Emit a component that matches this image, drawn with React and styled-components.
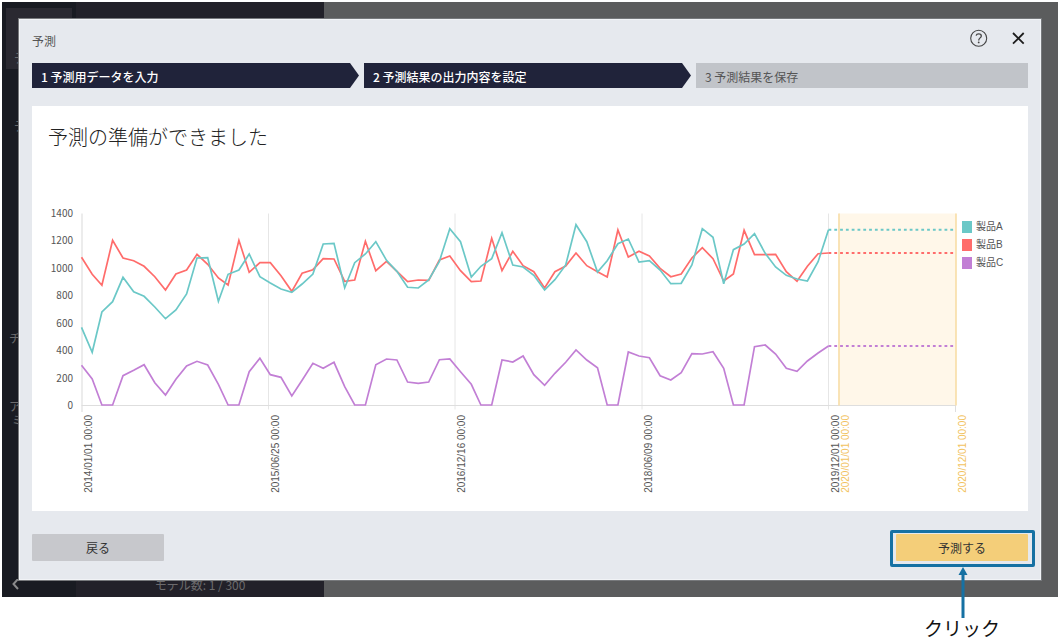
import React from "react";
import styled, { createGlobalStyle, css } from "styled-components";

const GlobalStyle = createGlobalStyle`
  * { box-sizing: border-box; }
  body {
    margin: 0;
    padding: 2px 2px 42px;
    background: #fff;
    color: #333;
    font-family: "Noto Sans CJK JP", "Noto Sans", sans-serif;
    font-size: 12px;
  }
`;

const Stage = styled.div`
  position: relative;
  padding: 17px;
`;

/* Application shell dimmed behind the dialog */
const Shell = styled.div`
  position: absolute;
  inset: 0;
  display: flex;
  overflow: hidden;
  background: #5b5c5d;
  color: #6c6b6d;
`;

const Rail = styled.nav`
  width: 74px;
  flex: none;
  display: flex;
  flex-direction: column;
  padding: 6px 4px 4px;
  background: #191b22;
`;

const RailItem = styled.div`
  flex: none;
  height: ${(p) => p.$height}px;
  display: flex;
  align-items: flex-end;
  padding: 0 0 4px ${(p) => (p.$indent ? 8 : 3)}px;
  background: ${(p) => (p.$active ? "#2a2931" : "transparent")};
  color: #6c6b6d;
  line-height: 14px;
  white-space: pre;
`;

const RailToggle = styled.button`
  margin-top: auto;
  padding: 0 0 0 5px;
  border: 0;
  background: none;
  color: #8a8a8c;
  text-align: left;
  line-height: 0;
`;

const ListPane = styled.div`
  width: 248px;
  flex: none;
  display: flex;
  align-items: flex-end;
  justify-content: center;
  padding-bottom: 3px;
  background: #222129;
  line-height: 18px;
`;

const Dialog = styled.section`
  position: relative;
  padding: 0 13px 19px;
  background: #e6e9ee;
  box-shadow: inset 0 0 0 1px #f1f3f6, 0 0 0 1px #77797c;
`;

const Header = styled.header`
  display: flex;
  align-items: center;
  justify-content: space-between;
  height: 44px;
`;

const DialogTitle = styled.h1`
  margin: 0;
  color: #555;
  font-size: 12px;
  font-weight: 400;
  line-height: 18px;
`;

const HeaderActions = styled.div`
  align-self: flex-start;
  display: flex;
  align-items: center;
  gap: 20px;
  height: 38px;
`;

const IconButton = styled.button`
  width: 20px;
  height: 20px;
  padding: 0;
  border: 0;
  background: none;
  line-height: 0;
  cursor: pointer;
`;

const Steps = styled.ol`
  display: grid;
  grid-template-columns: repeat(3, 1fr);
  margin: 0;
  padding: 0;
  list-style: none;
`;

const Step = styled.li`
  height: 25px;
  padding: 0 9px;
  font-size: 12px;
  line-height: 27px;
  white-space: nowrap;
  ${(p) =>
    p.$reached
      ? css`
          margin-right: 5px;
          background: #20233a;
          color: #fff;
          font-weight: 500;
          clip-path: polygon(0 0, calc(100% - 9px) 0, 100% 50%, calc(100% - 9px) 100%, 0 100%);
        `
      : css`
          background: #c1c4c9;
          color: #555;
        `}
`;

const Panel = styled.div`
  margin-top: 18px;
  padding: 16px 0 11px;
  background: #fff;
`;

const PanelTitle = styled.h2`
  margin: 0 16px;
  color: #222;
  font-size: 20px;
  font-weight: 300;
  line-height: 30px;
`;

const Figure = styled.figure`
  display: flex;
  align-items: flex-start;
  margin: 48px 0 0;
`;

const Plot = styled.svg`
  flex: 1;
  min-width: 0;
  overflow: visible;
  font-size: 10px;
`;

const AxisValue = styled.text`
  fill: #555;
  text-anchor: end;
`;

const AxisDate = styled.text`
  fill: ${(p) => (p.$forecast ? "#f2c25e" : "#555")};
  font-family: "Liberation Sans", sans-serif;
  text-anchor: end;
`;

const Legend = styled.ul`
  flex: none;
  width: 66px;
  margin: 0;
  padding: 21px 0 0;
  list-style: none;
`;

const LegendItem = styled.li`
  display: flex;
  align-items: center;
  gap: 4px;
  margin-bottom: 6px;
  color: #555;
  font-family: "Liberation Sans", "Noto Sans CJK JP", sans-serif;
  font-size: 10px;
  line-height: 12px;
`;

const Swatch = styled.span`
  width: 10px;
  height: 12px;
  background: ${(p) => p.$color};
`;

const Footer = styled.footer`
  display: flex;
  justify-content: space-between;
  margin-top: 23px;
`;

const ActionButton = styled.button`
  display: block;
  width: 132px;
  height: 27px;
  padding: 0;
  border: 0;
  border-radius: 1px;
  background: ${(p) => (p.$primary ? "#f4ce79" : "#c7c8cc")};
  color: #333;
  font-family: inherit;
  font-size: 12px;
  line-height: 27px;
  cursor: pointer;
`;

const Highlighted = styled.div`
  position: relative;

  &::before {
    content: "";
    position: absolute;
    inset: -4px -7px -6px -6px;
    border: 3px solid #1671a3;
    border-radius: 2px;
    pointer-events: none;
  }
`;

const Callout = styled.div`
  position: absolute;
  top: 33px;
  left: 0;
  right: 0;
  display: flex;
  flex-direction: column;
  align-items: center;
  color: #111;
  font-size: 19px;
  line-height: 20px;
`;

const COLORS = { a: "#6bc8c7", b: "#ff6c6b", c: "#c27fd5" };

/* Monthly readings, January 2014 to December 2019, as distance from the
   plot's top in thirds of a unit; 616 is the zero line. */
const SERIES = [
  {
    id: "b",
    name: "製品B",
    points: [
      172, 223, 256, 121, 174, 182, 199, 230, 270, 222, 210, 163,
      193, 234, 255, 121, 217, 188, 188, 227, 274, 220, 209, 176,
      177, 244, 240, 124, 212, 184, 214, 245, 240, 241, 180, 168,
      212, 245, 243, 115, 212, 154, 197, 215, 264, 215, 198, 159,
      197, 215, 231, 90, 171, 154, 168, 205, 230, 222, 174, 143,
      176, 243, 222, 91, 164, 164, 163, 215, 244, 199, 161, 159,
    ],
  },
  {
    id: "a",
    name: "製品A",
    points: [
      382, 457, 336, 305, 232, 275, 289, 321, 356, 330, 282, 174,
      173, 304, 223, 210, 162, 230, 249, 267, 277, 252, 222, 132,
      130, 263, 188, 162, 125, 181, 214, 262, 264, 240, 184, 86,
      125, 231, 199, 176, 98, 195, 201, 226, 270, 239, 195, 74,
      125, 216, 182, 131, 117, 186, 182, 210, 251, 250, 195, 86,
      112, 251, 149, 132, 101, 160, 201, 226, 237, 243, 185, 89,
    ],
  },
  {
    id: "c",
    name: "製品C",
    points: [
      496, 537, 615, 615, 527, 511, 494, 548, 585, 538, 498, 484,
      495, 553, 615, 615, 515, 475, 524, 532, 588, 541, 490, 505,
      487, 560, 615, 615, 494, 477, 480, 546, 550, 546, 479, 477,
      515, 553, 615, 615, 480, 486, 468, 524, 556, 520, 487, 450,
      480, 503, 615, 615, 456, 468, 473, 527, 540, 518, 461, 462,
      455, 505, 615, 615, 440, 435, 462, 505, 514, 483, 459, 438,
    ],
  },
];

const LEGEND = ["製品A", "製品B", "製品C"];

const DAY = 86400000;
const START = Date.UTC(2014, 0, 1);
const xOf = (time) => 49.5 + ((time - START) / DAY) * (747 / 2160);
const END = Date.UTC(2019, 11, 1);

const TICKS = [
  { x: 50, label: "2014/01/01 00:00", tall: true },
  { x: 236.5, label: "2015/06/25 00:00" },
  { x: 423, label: "2016/12/16 00:00" },
  { x: 610, label: "2018/06/09 00:00" },
  { x: 796.5, label: "2019/12/01 00:00" },
];

const FORECAST = [
  { x: 807, label: "2020/01/01 00:00" },
  { x: 924, label: "2020/12/01 00:00" },
];

function Chart() {
  return (
    <Plot viewBox="0 0 930 300" role="img" aria-label="製品A、製品B、製品Cの推移と予測期間">
      <rect x="807" y="13.5" width="117" height="192" fill="#fff7e9" />
      {TICKS.map((t) => (
        <path
          key={t.label}
          d={`M${t.x} 13.5V${t.tall ? 212 : 209.5}`}
          stroke={t.tall ? "#d9d9d9" : "#e6e6e6"}
          strokeWidth="1"
        />
      ))}
      <path d="M49.5 205.5H924M923.5 205V212" stroke="#dedede" fill="none" />
      {FORECAST.map((t) => (
        <path key={t.label} d={`M${t.x} 13.5V205.5`} stroke="#f8dda6" strokeWidth="1.6" />
      ))}
      {[1400, 1200, 1000, 800, 600, 400, 200, 0].map((v) => (
        <AxisValue key={v} x="41" y={Math.round(205 - (v / 1400) * 192 + 4)}>
          {v}
        </AxisValue>
      ))}
      {[...TICKS, ...FORECAST].map((t, i) => (
        <AxisDate
          key={t.label}
          $forecast={i >= TICKS.length}
          transform={`translate(${t.x + 10} 215) rotate(-90)`}
        >
          {t.label}
        </AxisDate>
      ))}
      {SERIES.map((s) => {
        const last = s.points[s.points.length - 1] / 3;
        const line = s.points
          .map((p, i) => `${xOf(Date.UTC(2014, i, 1)).toFixed(1)},${(p / 3).toFixed(1)}`)
          .join(" ");
        return (
          <g key={s.id} fill="none" stroke={COLORS[s.id]} strokeWidth="1.7">
            <polyline points={line} />
            <path
              d={`M${xOf(END)} ${last}H921.5`}
              strokeWidth="2"
              strokeDasharray="2.8 3"
            />
          </g>
        );
      })}
    </Plot>
  );
}

export default function App() {
  return (
    <>
      <GlobalStyle />
      <Stage>
        <Shell aria-hidden="true">
          <Rail>
            <RailItem $active $height={61} $indent>デ</RailItem>
            <RailItem $height={68} $indent>デ</RailItem>
            <RailItem $height={212}>チ</RailItem>
            <RailItem $height={82}>{"ア\n ミ"}</RailItem>
            <RailToggle type="button" tabIndex={-1}>
              <svg width="8" height="14" viewBox="0 0 8 14" fill="none" stroke="currentColor" strokeWidth="2">
                <path d="M7 0L2.5 5L7 10" />
              </svg>
            </RailToggle>
          </Rail>
          <ListPane>モデル数: 1 / 300</ListPane>
        </Shell>

        <Dialog role="dialog" aria-labelledby="dialog-title">
          <Header>
            <DialogTitle id="dialog-title">予測</DialogTitle>
            <HeaderActions>
              <IconButton type="button" aria-label="ヘルプ">
                <svg width="20" height="20" viewBox="0 0 20 20" fill="none" stroke="#444">
                  <circle cx="10.7" cy="10.3" r="8" strokeWidth="1.1" />
                  <path
                    d="M8.1 7.6C8.4 6.4 9.4 5.8 10.7 5.8C12.2 5.8 13.3 6.6 13.3 7.9C13.3 9.8 10.7 10 10.7 12.4"
                    strokeWidth="1.3"
                  />
                  <circle cx="10.7" cy="14.4" r="0.9" fill="#444" stroke="none" />
                </svg>
              </IconButton>
              <IconButton type="button" aria-label="閉じる">
                <svg width="20" height="20" viewBox="0 0 20 20" fill="none" stroke="#1c1c1c" strokeWidth="1.8">
                  <path d="M5 5L15.7 15.7M15.7 5L5 15.7" />
                </svg>
              </IconButton>
            </HeaderActions>
          </Header>

          <Steps>
            <Step $reached>1 予測用データを入力</Step>
            <Step $reached>2 予測結果の出力内容を設定</Step>
            <Step>3 予測結果を保存</Step>
          </Steps>

          <Panel>
            <PanelTitle>予測の準備ができました</PanelTitle>
            <Figure>
              <Chart />
              <Legend>
                {LEGEND.map((name, i) => (
                  <LegendItem key={name}>
                    <Swatch $color={[COLORS.a, COLORS.b, COLORS.c][i]} />
                    {name}
                  </LegendItem>
                ))}
              </Legend>
            </Figure>
          </Panel>

          <Footer>
            <ActionButton type="button">戻る</ActionButton>
            <Highlighted>
              <ActionButton type="button" $primary>予測する</ActionButton>
              <Callout>
                <svg width="11" height="51" viewBox="0 0 11 51">
                  <path d="M6 0L10.5 8H7.5V51H4.5V8H1.5Z" fill="#1671a3" />
                </svg>
                <span>クリック</span>
              </Callout>
            </Highlighted>
          </Footer>
        </Dialog>
      </Stage>
    </>
  );
}
